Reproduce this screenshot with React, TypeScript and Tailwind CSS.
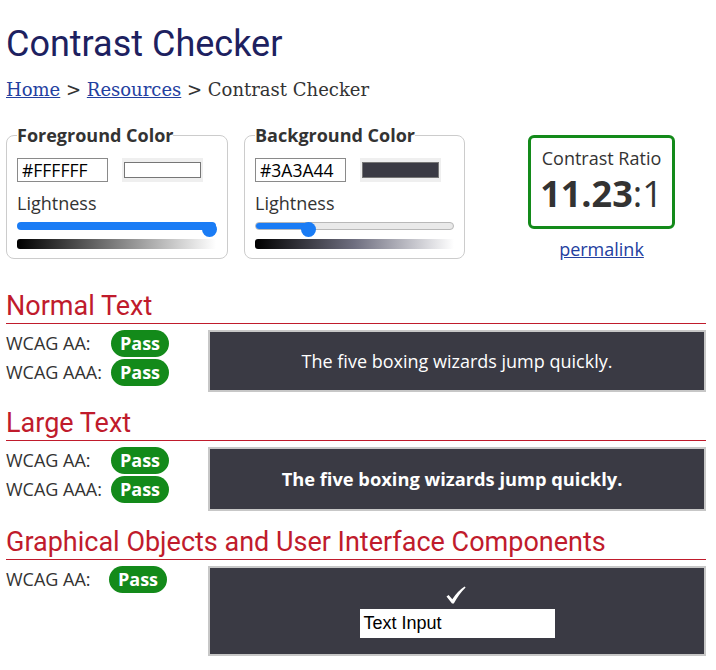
import React from "react";

const sans = "font-['Open_Sans',sans-serif]";
const roboto = "font-['Roboto',sans-serif]";

function Pass() {
  return (
    <span className="inline-block rounded-full bg-[#138a1a] px-[9px] py-[2px] text-[18px] leading-[23px] font-bold text-white">
      Pass
    </span>
  );
}

function ColorBox({
  title,
  hex,
  swatch,
  width,
  background,
}: {
  title: string;
  hex: string;
  swatch: string;
  width: string;
  background: boolean;
}) {
  return (
    <fieldset className={`${width} rounded-[8px] border border-[#cccccc] px-[10px] pb-[9px]`}>
      <legend className="text-[18px] leading-[24px] font-bold text-[#333]">{title}</legend>
      <div className="mt-[11px] flex h-[24px] items-center">
        <input
          readOnly
          value={hex}
          className="h-[24px] w-[91px] border border-[#8a8a8a] bg-white pl-[4px] text-[17.5px] text-black outline-none"
        />
        <div className="ml-[14px] flex h-[24px] w-[81px] items-center justify-center bg-[#efefef]">
          <div className={`h-[16px] w-[77px] border border-[#767676] ${swatch}`} />
        </div>
      </div>
      <div className="mt-[10px] text-[18px] leading-[23px] text-[#333]">Lightness</div>
      <div className="relative mt-[7px] h-[15px] w-[199px]">
        {background ? (
          <div className="mt-[3px] flex h-[8px] w-full overflow-hidden rounded-full border border-[#b8b8b8] bg-[#e9e9e9]">
            <div className="h-full w-[53px] bg-[#1a7cf5]" />
          </div>
        ) : (
          <div className="mt-[3px] h-[8px] w-full rounded-full bg-[#1a7cf5]" />
        )}
        <div
          className={`absolute top-0 h-[15px] w-[15px] rounded-full bg-[#1a7cf5] ${
            background ? "left-[46px]" : "left-[185px]"
          }`}
        />
      </div>
      <div
        className={`mt-[2px] h-[10px] w-[199px] rounded-l-[3px] ${
          background
            ? "bg-[linear-gradient(to_right,#000000,#6f6f80_50%,#ffffff)]"
            : "bg-[linear-gradient(to_right,#000000,#ffffff)]"
        }`}
      />
    </fieldset>
  );
}

function Section({
  title,
  labels,
  labelWidth,
  boxHeight,
  children,
}: {
  title: string;
  labels: string[];
  labelWidth: string;
  boxHeight: string;
  children: React.ReactNode;
}) {
  return (
    <div className="mt-[16px] first:mt-[30px]">
      <h2
        className={`${roboto} border-b border-[#c01b2c] pb-[2px] text-[27px] leading-[30px] font-normal text-[#c01b2c]`}
      >
        {title}
      </h2>
      <div className="mt-[6px] flex items-start">
        <div className="flex w-[202px] flex-col gap-[2px]">
          {labels.map((l) => (
            <div key={l} className="flex items-center text-[18px] leading-[27px] text-[#333]">
              <span className={labelWidth}>{l}</span>
              <Pass />
            </div>
          ))}
        </div>
        <div
          className={`${boxHeight} flex-1 border-2 border-[#c7c7c7] bg-[#3a3a44] text-white`}
        >
          {children}
        </div>
      </div>
    </div>
  );
}

export default function App() {
  return (
    <div className={`${sans} min-h-[670px] w-[716px] bg-white pl-[6px] pr-[10px] text-[#333]`}>
      <h1 className={`${roboto} pt-[24px] text-[36px] leading-[40px] font-normal text-[#1d2160]`}>
        Contrast Checker
      </h1>
      <nav className="mt-[12px] font-['DejaVu_Serif',serif] text-[18px] leading-[28px] text-[#333]">
        <a href="#" className="text-[#2340a0] underline">
          Home
        </a>{" "}
        &gt;{" "}
        <a href="#" className="text-[#2340a0] underline">
          Resources
        </a>{" "}
        &gt; Contrast Checker
      </nav>

      <div className="mt-[19px] flex items-start">
        <ColorBox title="Foreground Color" hex="#FFFFFF" swatch="bg-white" width="w-[222px]" background={false} />
        <div className="ml-[16px]">
          <ColorBox title="Background Color" hex="#3A3A44" swatch="bg-[#3a3a44]" width="w-[221px]" background />
        </div>
        <div className="ml-[63px] mt-[12px] flex w-[147px] flex-col items-center">
          <div className="flex h-[94px] w-[147px] flex-col items-center rounded-[6px] border-[3px] border-[#138a1a] pt-[9px]">
            <div className="text-[18px] leading-[23px] text-[#333]">Contrast Ratio</div>
            <div className="mt-[6px] text-[36px] leading-[36px] text-[#333]">
              <span className="font-bold">11.23</span>:1
            </div>
          </div>
          <a href="#" className="mt-[9px] text-[18px] leading-[23px] text-[#2340a0] underline">
            permalink
          </a>
        </div>
      </div>

      <div>
        <Section title="Normal Text" labels={["WCAG AA:", "WCAG AAA:"]} labelWidth="w-[105px]" boxHeight="h-[62px]">
          <div className="flex h-full items-center justify-center text-[18px]">
            The five boxing wizards jump quickly.
          </div>
        </Section>
        <Section title="Large Text" labels={["WCAG AA:", "WCAG AAA:"]} labelWidth="w-[105px]" boxHeight="h-[64px]">
          <div className="flex h-full items-center justify-center pr-[10px] text-[18.3px] font-bold">
            The five boxing wizards jump quickly.
          </div>
        </Section>
        <Section
          title="Graphical Objects and User Interface Components"
          labels={["WCAG AA:"]}
          labelWidth="w-[103px]"
          boxHeight="h-[90px]"
        >
          <div className="flex flex-col items-center pt-[18px]">
            {/* check mark */}
            <svg width="20" height="18" viewBox="0 0 20 18" className="-ml-[2px]" aria-hidden="true">
              <path
                d="M0.5 10.5 L2.6 9 L6.3 13.2 Q11.5 5 18.6 0.4 L19.6 1.4 Q12.8 8 7.8 17.6 L6 17.6 Z"
                fill="#ffffff"
              />
            </svg>
            <div className="mt-[5px] flex h-[29px] w-[195px] items-center bg-white pl-[4px] font-['Liberation_Sans',Arial,sans-serif] text-[18px] text-black">
              Text Input
            </div>
          </div>
        </Section>
      </div>
    </div>
  );
}
